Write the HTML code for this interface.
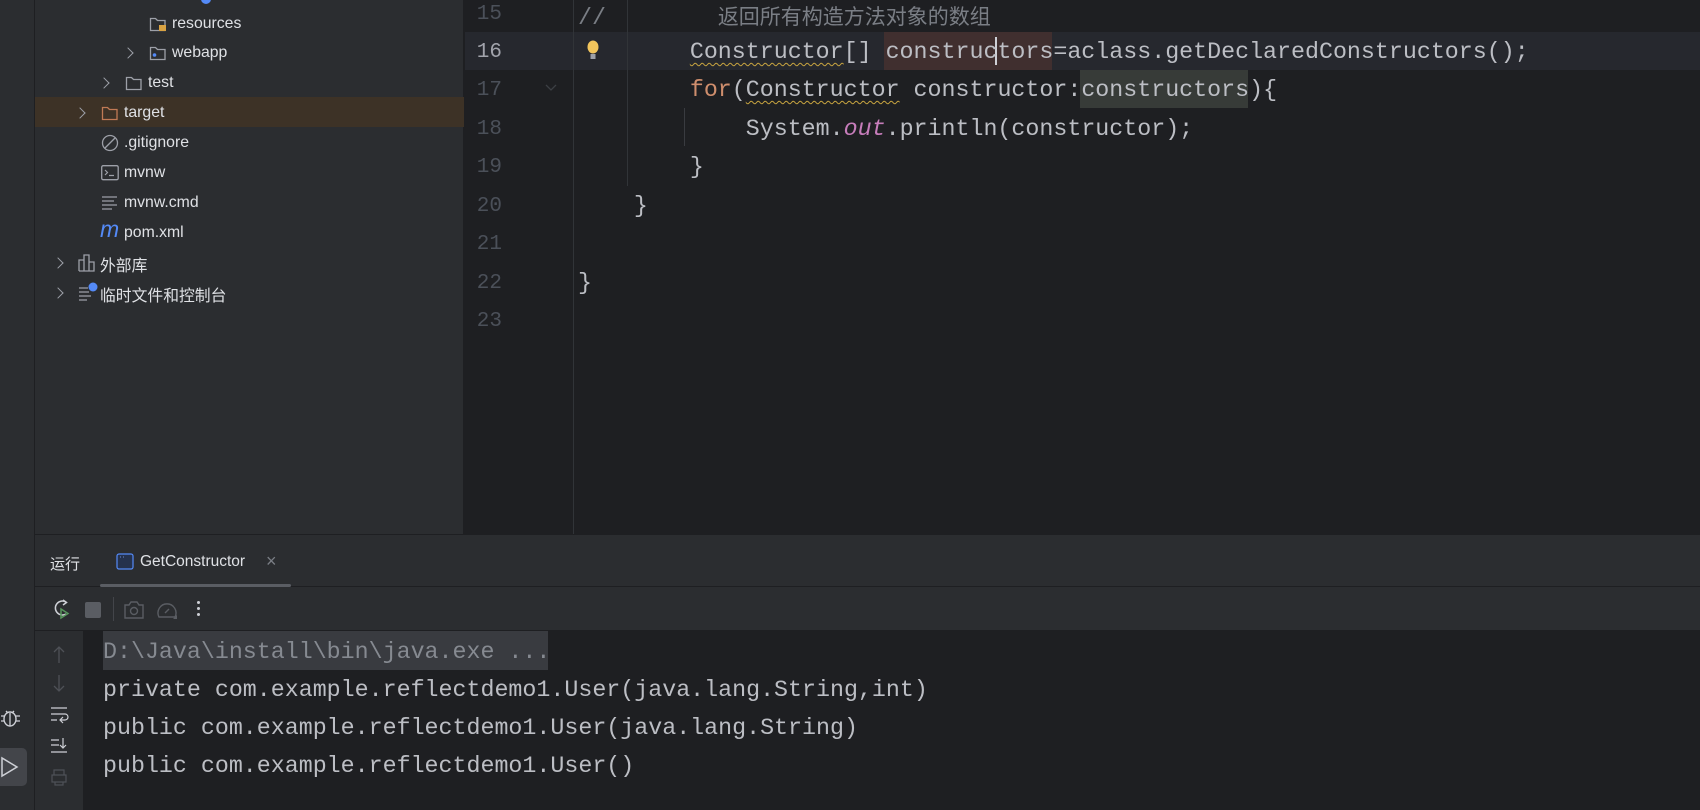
<!DOCTYPE html>
<html><head><meta charset="utf-8"><style>
*{margin:0;padding:0;box-sizing:border-box}
body{width:1700px;height:810px;overflow:hidden;background:#1e1f22;position:relative;font-family:"Liberation Sans","Noto Sans CJK SC",sans-serif;color:#dfe1e5}
.abs{position:absolute}
.mono{font-family:"Liberation Mono","Noto Sans CJK SC",monospace;font-size:23.3px;white-space:pre;color:#bcbec4}
.tree{font-size:15.8px;color:#dfe1e5;white-space:nowrap}
.ln{position:absolute;left:466px;width:36px;text-align:right;font-family:"Liberation Mono",monospace;font-size:21px;color:#4b5059}
.chev{position:absolute;width:8px;height:8px;border-right:1.6px solid #9da0a8;border-top:1.6px solid #9da0a8;transform:rotate(45deg)}
.wavy{text-decoration:underline wavy #c9a540;text-decoration-thickness:1px;text-underline-offset:4px}
</style></head><body>
<!-- left strip -->
<div class="abs" style="left:0;top:0;width:35px;height:810px;background:#2b2d30;border-right:1px solid #1e1f22"></div>
<!-- project panel -->
<div class="abs" style="left:35px;top:0;width:429px;height:534px;background:#2b2d30;border-right:1px solid #1e1f22"></div>
<div class="abs" style="left:35px;top:97px;width:429px;height:30px;background:#3d3226"></div>
<div class="abs" style="left:201px;top:-6px;width:10px;height:10px;border-radius:50%;background:#548af7"></div>

<div class="abs tree" style="left:172px;top:15px">resources</div>
<svg class="abs" style="left:149px;top:16px" width="18" height="16"><path d="M1.5 2.5h5l2 2h7.5v10h-14.5z" fill="none" stroke="#9da0a8" stroke-width="1.3"/><rect x="10" y="9" width="7" height="6" fill="#d9a343"/></svg>
<div class="chev" style="left:124px;top:49px"></div>
<svg class="abs" style="left:149px;top:45px" width="18" height="16"><path d="M1.5 2.5h5l2 2h7.5v10h-14.5z" fill="none" stroke="#9da0a8" stroke-width="1.3"/><circle cx="5.5" cy="10" r="1.8" fill="#548af7"/></svg>
<div class="abs tree" style="left:172px;top:44px">webapp</div>
<div class="chev" style="left:100px;top:79px"></div>
<svg class="abs" style="left:125px;top:75px" width="18" height="16"><path d="M1.5 2.5h5l2 2h7.5v10h-14.5z" fill="none" stroke="#9da0a8" stroke-width="1.3"/></svg>
<div class="abs tree" style="left:148px;top:74px">test</div>
<div class="chev" style="left:76px;top:109px"></div>
<svg class="abs" style="left:101px;top:105px" width="18" height="16"><path d="M1.5 2.5h5l2 2h7.5v10h-14.5z" fill="none" stroke="#c07a55" stroke-width="1.3"/></svg>
<div class="abs tree" style="left:124px;top:104px">target</div>
<svg class="abs" style="left:101px;top:134px" width="18" height="18"><circle cx="9" cy="9" r="7.5" fill="none" stroke="#9da0a8" stroke-width="1.3"/><path d="M4 14L14 4" stroke="#9da0a8" stroke-width="1.3"/></svg>
<div class="abs tree" style="left:124px;top:134px">.gitignore</div>
<svg class="abs" style="left:101px;top:165px" width="18" height="16"><rect x="0.7" y="0.7" width="16.5" height="14" rx="1.5" fill="none" stroke="#9da0a8" stroke-width="1.3"/><path d="M4 5l2.5 2.5L4 10M8 10.5h5" stroke="#9da0a8" stroke-width="1.2" fill="none"/></svg>
<div class="abs tree" style="left:124px;top:164px">mvnw</div>
<svg class="abs" style="left:101px;top:195px" width="18" height="16"><path d="M1 2h15M1 6h12M1 10h15M1 14h10" stroke="#9da0a8" stroke-width="1.3"/></svg>
<div class="abs tree" style="left:124px;top:194px">mvnw.cmd</div>
<div class="abs" style="left:100px;top:216px;font-size:23px;font-style:italic;color:#548af7;font-family:'Liberation Sans',sans-serif">m</div>
<div class="abs tree" style="left:124px;top:224px">pom.xml</div>
<div class="chev" style="left:54px;top:259px"></div>
<svg class="abs" style="left:78px;top:254px" width="18" height="18"><path d="M1 17V6h5v11M6 17V1h5v16M11 17V8h5v9H1" fill="none" stroke="#9da0a8" stroke-width="1.3"/></svg>
<div class="abs tree" style="left:100px;top:253px">外部库</div>
<div class="chev" style="left:54px;top:289px"></div>
<svg class="abs" style="left:78px;top:282px" width="20" height="20"><path d="M1 6h9M1 10h10M1 14h12M1 18h8" stroke="#9da0a8" stroke-width="1.3"/><circle cx="15" cy="5" r="4.5" fill="#548af7"/></svg>
<div class="abs tree" style="left:100px;top:283px">临时文件和控制台</div>

<!-- editor -->
<div class="abs" style="left:465px;top:32px;width:1235px;height:38px;background:#26282e"></div>
<div class="abs" style="left:573px;top:0;width:1px;height:534px;background:#313438"></div>
<div class="abs" style="left:627px;top:0;width:1px;height:186px;background:#313438"></div>
<div class="abs" style="left:684px;top:108px;width:1px;height:38px;background:#393b40"></div>
<div class="abs" style="left:884px;top:32px;width:168px;height:38px;background:#402f2f"></div>
<div class="abs" style="left:1080px;top:70px;width:168px;height:38px;background:#373b38"></div>
<div class="abs" style="left:995px;top:37px;width:2px;height:28px;background:#ced0d6"></div>
<div class="ln" style="top:3px">15</div>
<div class="ln" style="top:41px;color:#a1a3ab">16</div>
<div class="ln" style="top:79px">17</div>
<div class="ln" style="top:118px">18</div>
<div class="ln" style="top:156px">19</div>
<div class="ln" style="top:195px">20</div>
<div class="ln" style="top:233px">21</div>
<div class="ln" style="top:272px">22</div>
<div class="ln" style="top:310px">23</div>
<svg class="abs" style="left:586px;top:40px" width="14" height="22"><ellipse cx="7" cy="7" rx="5.5" ry="6.5" fill="#f2c55c"/><rect x="4.5" y="14" width="5" height="5" fill="#9da0a8"/></svg>
<svg class="abs" style="left:545px;top:84px" width="12" height="8"><path d="M1 1l5 5 5-5" fill="none" stroke="#3c3f44" stroke-width="1.3"/></svg>

<div class="abs mono" style="left:578px;top:1px;color:#7a7e85">//        <span style="font-size:21px">返回所有构造方法对象的数组</span></div>
<div class="abs mono" style="left:578px;top:39px">        <span class="wavy">Constructor</span>[] constructors=aclass.getDeclaredConstructors();</div>
<div class="abs mono" style="left:578px;top:77px">        <span style="color:#cf8e6d">for</span>(<span class="wavy">Constructor</span> constructor:constructors){</div>
<div class="abs mono" style="left:578px;top:116px">            System.<i style="color:#c77dbb">out</i>.println(constructor);</div>
<div class="abs mono" style="left:578px;top:154px">        }</div>
<div class="abs mono" style="left:578px;top:193px">    }</div>
<div class="abs mono" style="left:578px;top:270px">}</div>

<!-- console -->
<div class="abs" style="left:35px;top:534px;width:1665px;height:97px;background:#2b2d30;border-top:1px solid #1e1f22;border-bottom:1px solid #1e1f22"></div>
<div class="abs" style="left:35px;top:586px;width:1665px;height:1px;background:#1e1f22"></div>
<div class="abs" style="left:50px;top:553px;font-size:15px;color:#dfe1e5">运行</div>
<svg class="abs" style="left:116px;top:553px" width="18" height="18"><rect x="1" y="1" width="16" height="15" rx="2" fill="#25324d" stroke="#548af7" stroke-width="1.2"/><path d="M4 4h1M7 4h1" stroke="#6c8bd1"/></svg>
<div class="abs" style="left:140px;top:553px;font-size:15.5px;color:#dfe1e5">GetConstructor</div>
<div class="abs" style="left:266px;top:551px;font-size:18px;color:#7a7e85">×</div>
<div class="abs" style="left:100px;top:584px;width:191px;height:3px;background:#5a5d63;border-radius:2px"></div>
<svg class="abs" style="left:51px;top:598px" width="22" height="22"><path d="M15 4a7 7 0 1 0 0 12" fill="none" stroke="#ced0d6" stroke-width="1.5"/><path d="M12 2l3.5 2.5L12 7" fill="none" stroke="#ced0d6" stroke-width="1.5"/><path d="M10 11v9l7-4.5z" fill="none" stroke="#57965c" stroke-width="1.5"/></svg>
<div class="abs" style="left:85px;top:602px;width:16px;height:16px;background:#5a5d63;border-radius:2px"></div>
<div class="abs" style="left:113px;top:597px;width:1px;height:24px;background:#43454a"></div>
<svg class="abs" style="left:124px;top:601px" width="20" height="18"><path d="M1 4h4l2-3h6l2 3h4v13H1z" fill="none" stroke="#5a5d63" stroke-width="1.4"/><circle cx="10" cy="10" r="3.5" fill="none" stroke="#5a5d63" stroke-width="1.4"/></svg>
<svg class="abs" style="left:157px;top:600px" width="22" height="20"><path d="M2 17A9 9 0 1 1 18 17z" fill="none" stroke="#5a5d63" stroke-width="1.4"/><path d="M8 13l4-4" stroke="#5a5d63" stroke-width="1.4"/><path d="M16 19l4-4v4z" fill="#5a5d63"/></svg>
<div class="abs" style="left:197px;top:601px;width:3px;height:3px;background:#ced0d6;border-radius:50%;box-shadow:0 6px 0 #ced0d6,0 12px 0 #ced0d6"></div>
<div class="abs" style="left:35px;top:631px;width:48px;height:179px;background:#2b2d30"></div>
<svg class="abs" style="left:50px;top:645px" width="20" height="160"><path d="M9 2v16M4 7l5-5 5 5" fill="none" stroke="#4e5157" stroke-width="1.3"/><path d="M9 30v16M4 41l5 5 5-5" fill="none" stroke="#4e5157" stroke-width="1.3"/><path d="M1 63h16M1 69h14a3 3 0 0 1 0 6h-4M1 75h6M13 72l-3 3 3 3" fill="none" stroke="#ced0d6" stroke-width="1.2"/><path d="M1 95h8M1 100h8M1 107h16M13 93v10M10 100l3 3 3-3" fill="none" stroke="#ced0d6" stroke-width="1.2"/><path d="M4 130v-5h10v5M2 130h14v7H2zM5 137v3h8v-3" fill="none" stroke="#4e5157" stroke-width="1.2"/></svg>
<svg class="abs" style="left:0;top:706px" width="22" height="24"><ellipse cx="10" cy="13" rx="6" ry="7" fill="none" stroke="#ced0d6" stroke-width="1.4"/><path d="M1 10h3M1 15h3M16 10h4M16 15h4M6 5l2 2M14 5l-2 2M10 7v13" stroke="#ced0d6" stroke-width="1.3"/></svg>
<div class="abs" style="left:0;top:748px;width:27px;height:38px;background:#43454a;border-radius:0 5px 5px 0"></div>
<svg class="abs" style="left:0;top:755px" width="22" height="24"><path d="M2 3v18l15-9z" fill="none" stroke="#ced0d6" stroke-width="1.5"/></svg>
<div class="abs" style="left:103px;top:631px;width:445px;height:39px;background:#393b40"></div>
<div class="abs mono" style="left:103px;top:639px;color:#868a91">D:\Java\install\bin\java.exe ...</div>
<div class="abs mono" style="left:103px;top:677px">private com.example.reflectdemo1.User(java.lang.String,int)</div>
<div class="abs mono" style="left:103px;top:715px">public com.example.reflectdemo1.User(java.lang.String)</div>
<div class="abs mono" style="left:103px;top:753px">public com.example.reflectdemo1.User()</div>
</body></html>
